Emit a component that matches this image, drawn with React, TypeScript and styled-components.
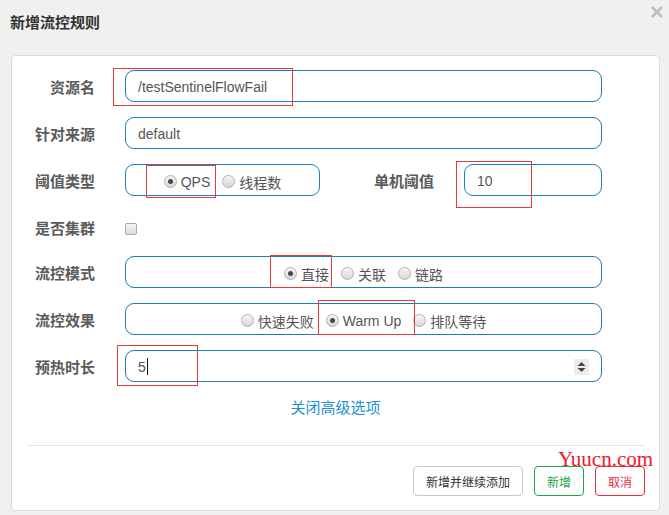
import styled, {createGlobalStyle} from "styled-components";

const GlobalStyle = createGlobalStyle`
  html, body {
    margin: 0;
    padding: 0;
    background: #f0f0f0;
  }
  * {
    box-sizing: border-box;
  }
`;

const FONT = `"Liberation Sans", "Noto Sans CJK SC", sans-serif`;

const Page = styled.div`
  position: relative;
  width: 669px;
  height: 515px;
  overflow: hidden;
  background: #f0f0f0;
  font-family: ${FONT};
  color: #555;
`;

const Header = styled.div`
  height: 55px;
  display: flex;
  justify-content: space-between;
  align-items: flex-start;
  padding: 6px 6px 0 10px;
`;

const Title = styled.h4`
  margin: 9px 0 0;
  font-size: 15px;
  line-height: 16px;
  font-weight: bold;
  color: #333;
`;

const Close = styled.button`
  width: 12px;
  height: 12px;
  padding: 0;
  border: 0;
  background: none;
  display: flex;
`;

const Card = styled.div`
  margin-left: 11px;
  width: 649px;
  height: 456px;
  background: #fff;
  border: 1px solid #dcdcdc;
  border-radius: 4px;
  padding-top: 14px;
`;

const Form = styled.div`
  padding-right: 57px;
`;

const Row = styled.div<{ $h?: number }>`
  display: grid;
  grid-template-columns: 83px 1fr;
  column-gap: 30px;
  height: ${p => p.$h ?? 32}px;
  margin-bottom: 15px;
`;

const Label = styled.label`
  text-align: right;
  font-size: 15px;
  font-weight: bold;
  line-height: 20px;
  padding-top: 8px;
  color: #5a5a5a;
  white-space: nowrap;
`;

const Field = styled.div`
  height: 32px;
  border: 1px solid #1f7bb6;
  border-radius: 9px;
  display: flex;
  align-items: center;
  padding: 1px 12px 0 12px;
  font-size: 14px;
  color: #555;
`;

const Value = styled.span`
  flex: 1;
  display: flex;
  align-items: center;
`;

const Caret = styled.span`
  display: inline-block;
  width: 1px;
  height: 17px;
  background: #111;
  margin-left: 1px;
`;

const Spinner = styled.span`
  width: 15px;
  height: 16px;
  background: #ececec;
  display: flex;
  align-items: center;
  justify-content: center;
`;

const RadioBox = styled(Field)<{ $justify?: string }>`
  justify-content: center;
  gap: 12px;
  padding-top: 3px;
`;

const Option = styled.span`
  display: flex;
  align-items: center;
  gap: 4px;
  white-space: nowrap;
`;

const RadioDot = styled.span<{ $checked?: boolean }>`
  width: 13px;
  height: 13px;
  border-radius: 50%;
  border: 1px solid #b0b0b0;
  background: linear-gradient(#f7f7f7, #d6d6d6);
  display: flex;
  align-items: center;
  justify-content: center;

  &::after {
    content: "";
    width: 5px;
    height: 5px;
    border-radius: 50%;
    background: ${p => (p.$checked ? "#4a4a4a" : "transparent")};
  }
`;

const Checkbox = styled.span`
  width: 12px;
  height: 12px;
  margin-top: 12px;
  border: 1px solid #a8a8a8;
  border-radius: 2px;
  background: linear-gradient(#f5f5f5, #dedede);
`;

const SplitField = styled.div`
  display: grid;
  grid-template-columns: 195px 84px 138px;
  column-gap: 30px;
`;

const Toggle = styled.a`
  display: block;
  margin-top: 16px;
  text-align: center;
  font-size: 15px;
  line-height: 20px;
  color: #1f8fd2;
  cursor: pointer;
`;

const Divider = styled.hr`
  margin: 27px 14px 0 15px;
  border: 0;
  border-top: 1px solid #e3e3e3;
`;

const Footer = styled.div`
  display: flex;
  justify-content: flex-end;
  gap: 11px;
  margin-top: 20px;
  padding-right: 14px;
`;

const Btn = styled.button<{ $tone?: "default" | "success" | "danger" }>`
  height: 30px;
  padding: 0 12px;
  font-family: ${FONT};
  font-size: 12px;
  background: #fff;
  border-radius: 4px;
  border: 1px solid
    ${p => (p.$tone === "success" ? "#1fa34b" : p.$tone === "danger" ? "#e52d3c" : "#c8c8c8")};
  color: ${p => (p.$tone === "success" ? "#1fa34b" : p.$tone === "danger" ? "#e52d3c" : "#333")};
`;

const RedBox = styled.div<{ $x: number; $y: number; $w: number; $h: number }>`
  position: absolute;
  left: ${p => p.$x}px;
  top: ${p => p.$y}px;
  width: ${p => p.$w}px;
  height: ${p => p.$h}px;
  border: 1px solid #e53a3a;
  pointer-events: none;
`;

const Watermark = styled.div`
  position: absolute;
  left: 558px;
  top: 449px;
  font-family: "Liberation Serif", serif;
  font-size: 21px;
  line-height: 21px;
  color: #f0192c;
  pointer-events: none;
`;

const Radio = ({label, checked}: { label: string; checked?: boolean }) => (
    <Option>
        <RadioDot $checked={checked}/>
        {label}
    </Option>
);

const App = () => {
    return (
        <Page>
            <GlobalStyle/>
            <Header>
                <Title>新增流控规则</Title>
                <Close>
                    <svg width="12" height="12" viewBox="0 0 12 12">
                        <path d="M1 1 L11 11 M11 1 L1 11" stroke="#bdbdbd" strokeWidth="2.6"/>
                    </svg>
                </Close>
            </Header>
            <Card>
                <Form>
                    <Row>
                        <Label>资源名</Label>
                        <Field><Value>/testSentinelFlowFail</Value></Field>
                    </Row>
                    <Row>
                        <Label>针对来源</Label>
                        <Field><Value>default</Value></Field>
                    </Row>
                    <Row>
                        <Label>阈值类型</Label>
                        <SplitField>
                            <RadioBox>
                                <Radio label="QPS" checked/>
                                <Radio label="线程数"/>
                            </RadioBox>
                            <Label>单机阈值</Label>
                            <Field><Value>10</Value></Field>
                        </SplitField>
                    </Row>
                    <Row $h={30}>
                        <Label>是否集群</Label>
                        <div><Checkbox style={{display: "block"}}/></div>
                    </Row>
                    <Row>
                        <Label>流控模式</Label>
                        <RadioBox>
                            <Radio label="直接" checked/>
                            <Radio label="关联"/>
                            <Radio label="链路"/>
                        </RadioBox>
                    </Row>
                    <Row>
                        <Label>流控效果</Label>
                        <RadioBox>
                            <Radio label="快速失败"/>
                            <Radio label="Warm Up" checked/>
                            <Radio label="排队等待"/>
                        </RadioBox>
                    </Row>
                    <Row>
                        <Label>预热时长</Label>
                        <Field>
                            <Value>5<Caret/></Value>
                            <Spinner>
                                <svg width="9" height="12" viewBox="0 0 9 12">
                                    <path d="M4.5 1 L8.5 5 L0.5 5 Z M0.5 7 L8.5 7 L4.5 11 Z" fill="#444"/>
                                </svg>
                            </Spinner>
                        </Field>
                    </Row>
                </Form>
                <Toggle>关闭高级选项</Toggle>
                <Divider/>
                <Footer>
                    <Btn>新增并继续添加</Btn>
                    <Btn $tone="success">新增</Btn>
                    <Btn $tone="danger">取消</Btn>
                </Footer>
            </Card>
            <RedBox $x={113} $y={68} $w={180} $h={38}/>
            <RedBox $x={146} $y={165} $w={70} $h={33}/>
            <RedBox $x={456} $y={161} $w={76} $h={47}/>
            <RedBox $x={270} $y={255} $w={62} $h={33}/>
            <RedBox $x={318} $y={300} $w={97} $h={35}/>
            <RedBox $x={117} $y={345} $w={81} $h={41}/>
            <Watermark>Yuucn.com</Watermark>
        </Page>
    );
};

export default App;
